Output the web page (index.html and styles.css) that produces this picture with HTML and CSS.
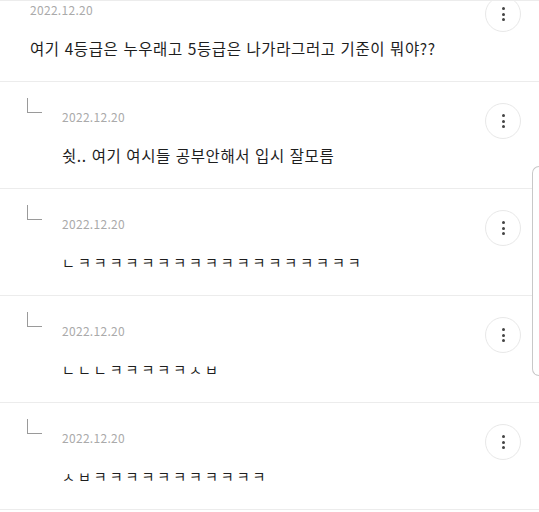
FILE: index.html
```html
<!DOCTYPE html>
<html lang="ko">
<head>
    <meta charset="UTF-8">
    <meta name="viewport" content="width=device-width, initial-scale=1.0">
    <title>댓글</title>
    <link rel="stylesheet" href="styles.css">
</head>
<body>

    <div id="comments">
        <div class="comment">
            <div class="comment-body">
                <div class="date">2022.12.20</div>
                <p class="text">여기 4등급은 누우래고 5등급은 나가라그러고 기준이 뭐야??</p>
            </div>
            <button class="more-btn"><span></span><span></span><span></span></button>
        </div>

        <div class="comment reply">
            <div class="reply-mark"></div>
            <div class="comment-body">
                <div class="date">2022.12.20</div>
                <p class="text">쉿.. 여기 여시들 공부안해서 입시 잘모름</p>
            </div>
            <button class="more-btn"><span></span><span></span><span></span></button>
        </div>

        <div class="comment reply">
            <div class="reply-mark"></div>
            <div class="comment-body">
                <div class="date">2022.12.20</div>
                <p class="text jamo">ㄴㅋㅋㅋㅋㅋㅋㅋㅋㅋㅋㅋㅋㅋㅋㅋㅋㅋㅋ</p>
            </div>
            <button class="more-btn"><span></span><span></span><span></span></button>
        </div>

        <div class="comment reply">
            <div class="reply-mark"></div>
            <div class="comment-body">
                <div class="date">2022.12.20</div>
                <p class="text jamo">ㄴㄴㄴㅋㅋㅋㅋㅋㅅㅂ</p>
            </div>
            <button class="more-btn"><span></span><span></span><span></span></button>
        </div>

        <div class="comment reply">
            <div class="reply-mark"></div>
            <div class="comment-body">
                <div class="date">2022.12.20</div>
                <p class="text jamo">ㅅㅂㅋㅋㅋㅋㅋㅋㅋㅋㅋㅋㅋ</p>
            </div>
            <button class="more-btn"><span></span><span></span><span></span></button>
        </div>
    </div>

    <div class="scroll-thumb"></div>

</body>
</html>
```

FILE: styles.css
```css
body { margin: 0; background: #fff; font-family: "Noto Sans CJK KR", "Noto Sans", sans-serif; color: #222; border-top: 1px solid #ececec; overflow: hidden; }
#comments { display: flex; flex-direction: column; margin-top: -26px; }
.comment { display: flex; align-items: flex-start; height: 107px; box-sizing: border-box; padding: 27px 18px 0 30px; border-bottom: 1px solid #ececec; }
.comment.reply { padding-left: 27px; }
.reply-mark { width: 15px; height: 15px; margin: -11px 20px 0 0; border-left: 1px solid #9a9a9a; border-bottom: 1px solid #9a9a9a; box-sizing: border-box; }
.comment-body { flex: 1; }
.date { font-size: 12px; line-height: 16px; color: #aaa; letter-spacing: 0.3px; }
.text { margin: 19px 0 0; font-size: 15.5px; line-height: 22px; color: #1e1e1e; letter-spacing: 0.6px; }
.text.jamo { font-size: 14px; letter-spacing: 3px; }
.more-btn { width: 36px; height: 36px; margin-top: -6px; padding: 0; border: 1px solid #e8e8e8; border-radius: 50%; background: #fff; display: flex; flex-direction: column; align-items: center; justify-content: center; gap: 2.5px; }
.more-btn span { width: 3px; height: 3px; border-radius: 50%; background: #444; }
.scroll-thumb { position: absolute; top: 166px; right: 0; width: 6px; height: 208px; border: 1px solid #c8c8c8; border-right: none; border-radius: 8px 0 0 8px; background: #fff; }
```
